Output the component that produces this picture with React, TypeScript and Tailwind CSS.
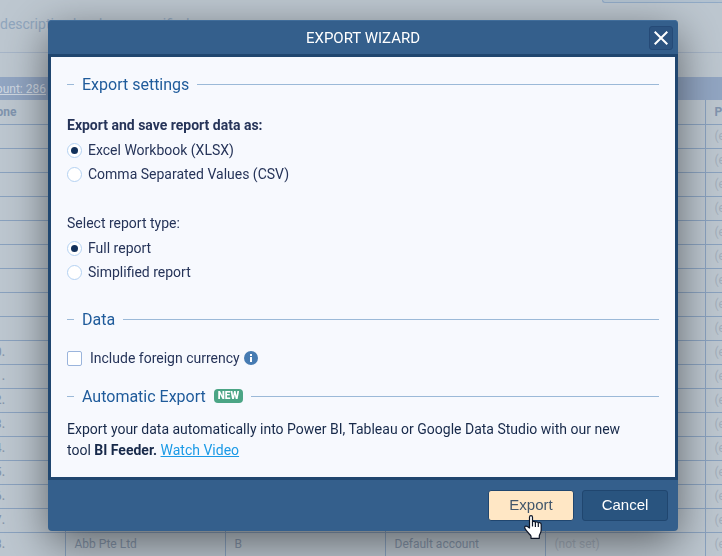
import { useState, type ReactNode } from "react";

const rows = Array.from({ length: 18 }, (_, i) => i + 1);

function Section({ title, badge }: { title: string; badge?: string }) {
  return (
    <h2 className="flex h-6 items-center text-base leading-[22px] text-[#1f5b9b]">
      <span className="mr-2 h-px w-[7px] bg-[#9bb9d8]" />
      <span className="pt-0.5">{title}</span>
      {badge && (
        <span className="ml-2 h-[14px] rounded bg-[#4ba585] px-1 text-[10px] leading-[14px] font-black text-white">
          {badge}
        </span>
      )}
      <span className="ml-2 h-px flex-1 bg-[#9bb9d8]" />
    </h2>
  );
}

function Radio(props: { name: string; checked: boolean; onChange: () => void; children: ReactNode }) {
  return (
    <label className="flex h-6 items-center gap-[6px]">
      <input
        type="radio"
        name={props.name}
        checked={props.checked}
        onChange={props.onChange}
        className="grid size-[15px] appearance-none place-items-center rounded-full border border-[#b4d2f2] bg-white before:size-[7px] before:rounded-full checked:before:bg-[#12305a]"
      />
      {props.children}
    </label>
  );
}

function ReportPage() {
  return (
    <div className="w-full overflow-hidden text-[12px]" inert>
      <div className="flex h-[53px] flex-col border-b border-[#a6b5c8]">
        <div className="h-[3px] w-[120px] self-end rounded-bl border-b border-l border-[#91aac6] bg-[#b3c2d0]" />
        <p className="pt-[9px] text-sm leading-6 whitespace-nowrap text-[#90a6be]">description has been specified</p>
      </div>
      <div className="mt-6 flex h-[23px] items-center bg-[#92a6c3]">
        <a href="#count" className="-ml-3 whitespace-nowrap text-[#d0d8e2] underline">
          Count: 286
        </a>
      </div>
      <table className="w-[865px] table-fixed border-collapse text-left leading-[23px] text-[#8595aa]">
        <colgroup>
          <col className="w-[65px]" />
          <col className="w-[160px]" />
          <col className="w-[160px]" />
          <col className="w-[160px]" />
          <col className="w-[160px]" />
          <col className="w-[160px]" />
        </colgroup>
        <thead>
          <tr className="h-6 border-b border-[#8aa2bf] leading-[21px] text-[#8094ae]">
            <th className="border-r border-[#8aa2bf] p-0 pt-0.5"><div className="-ml-3">None</div></th>
            <th className="border-r border-[#8aa2bf] p-0 pt-0.5 pl-[9px]">Name</th>
            <th className="border-r border-[#8aa2bf] p-0 pt-0.5 pl-[9px]">Type</th>
            <th className="border-r border-[#8aa2bf] p-0 pt-0.5 pl-[9px]">Account</th>
            <th className="border-r border-[#8aa2bf] p-0 pt-0.5 pl-[9px]">Group</th>
            <th className="p-0 pt-0.5 pl-[9px]">Phone</th>
          </tr>
        </thead>
        <tbody>
          {rows.map((n) => (
            <tr key={n} className="h-6 border-b border-[#8aa2bf]">
              <td className="border-r border-[#8aa2bf] p-0"><div className="-ml-3 font-medium">{n}.</div></td>
              <td className="border-r border-[#8aa2bf] p-0 pl-[9px]">Abb Pte Ltd</td>
              <td className="border-r border-[#8aa2bf] p-0 pl-[9px]">B</td>
              <td className="border-r border-[#8aa2bf] p-0 pl-[9px]">Default account</td>
              <td className="border-r border-[#8aa2bf] p-0 pl-[9px] text-[#a3aebb]">(not set)</td>
              <td className="p-0 pl-[9px] text-[#a3aebb]">(empty)</td>
            </tr>
          ))}
        </tbody>
      </table>
    </div>
  );
}

export default function App() {
  const [format, setFormat] = useState("xlsx");
  const [kind, setKind] = useState("full");
  const [currency, setCurrency] = useState(false);

  return (
    <div className="h-screen overflow-hidden bg-[#bdc7d0] font-['Roboto',sans-serif]">
      <ReportPage />
      <div className="fixed inset-0 overflow-hidden pt-5 pr-11 pl-12">
        <section
          role="dialog"
          aria-labelledby="wizard-title"
          className="mx-auto max-w-[630px] rounded bg-[#345f8c] text-sm text-[#263459] shadow-[0_12px_44px_rgba(0,0,0,0.5)]"
        >
          <header className="flex h-[34px] items-center rounded-t border-t border-[#416d9a] pr-[5px]">
            <h1 id="wizard-title" className="flex-1 pl-[29px] text-center text-[15px] leading-6 text-white">
              EXPORT WIZARD
            </h1>
            <button
              type="button"
              aria-label="Close"
              className="grid size-6 place-items-center rounded-[3px] border border-[#254a77] bg-[#2c5380]"
            >
              <svg viewBox="0 0 14 14" className="size-[14px]" fill="none" stroke="#fff" strokeWidth="2">
                <path d="M.7.7l12.6 12.6M13.3.7L.7 13.3" />
              </svg>
            </button>
          </header>

          <div className="border-3 border-[#20466f] bg-[#f7f9fe] px-4 pt-[15px] pb-4">
            <Section title="Export settings" />
            <fieldset className="mt-[17px]">
              <legend className="h-[25px] leading-6 font-bold">Export and save report data as:</legend>
              <Radio name="format" checked={format === "xlsx"} onChange={() => setFormat("xlsx")}>
                Excel Workbook (XLSX)
              </Radio>
              <Radio name="format" checked={format === "csv"} onChange={() => setFormat("csv")}>
                Comma Separated Values (CSV)
              </Radio>
            </fieldset>
            <fieldset className="mt-[25px]">
              <legend className="h-[25px] leading-6">Select report type:</legend>
              <Radio name="kind" checked={kind === "full"} onChange={() => setKind("full")}>
                Full report
              </Radio>
              <Radio name="kind" checked={kind === "simple"} onChange={() => setKind("simple")}>
                Simplified report
              </Radio>
            </fieldset>

            <div className="mt-[23px]">
              <Section title="Data" />
            </div>
            <div className="mt-[15px] flex h-6 items-center gap-1">
              <label className="flex items-center gap-2">
                <input
                  type="checkbox"
                  checked={currency}
                  onChange={() => setCurrency(!currency)}
                  className="size-[15px] appearance-none rounded-[2px] border border-[#9ab4dc] bg-white checked:bg-[#12305a]"
                />
                Include foreign currency
              </label>
              <svg viewBox="0 0 14 14" className="size-[14px]">
                <circle cx="7" cy="7" r="7" fill="#467bb2" />
                <path d="M6 3h2v2H6zM6 6h2v5H6z" fill="#fff" />
              </svg>
            </div>

            <div className="mt-[14px]">
              <Section title="Automatic Export" badge="NEW" />
            </div>
            <p className="mt-[11px] max-w-[570px] leading-[21px] text-[#17294a]">
              Export your data automatically into Power BI, Tableau or Google Data Studio with our new tool{" "}
              <b>BI Feeder.</b>{" "}
              <a href="#video" className="text-[#1b9ae6] underline">
                Watch Video
              </a>
            </p>
          </div>

          <footer className="flex h-[51px] items-center justify-end gap-2 pr-[10px] font-['Liberation_Sans',Arial,sans-serif] text-[15px]">
            <button
              type="button"
              className="relative h-[31px] w-[86px] rounded-[3px] border border-[#20466f] bg-[#ffe7c5] pb-0.5 text-[#42566b]"
            >
              Export
              <svg
                viewBox="0 0 18 25"
                className="absolute top-[24px] left-[35px] h-[25px] w-[18px]"
                fill="#fff"
                stroke="#0d1526"
                strokeWidth="1.2"
                strokeLinejoin="round"
              >
                <path d="M5.500 13V2.200C5.500.2 8.500.2 8.500 2.200V7.500c0-1.600 2.900-1.600 2.900.4 0-1.600 2.900-1.400 2.900.6 0-1.400 2.900-1.200 2.900.9V15c0 3-1.900 4.500-1.900 6v2.300H7V21C5.500 19 2.500 16.500 1 13.500c-1-2 1-3.200 2.400-1.900z" />
                <path d="M8.500 7.500v4M11.400 8v4M14.300 9v3" fill="none" />
              </svg>
            </button>
            <button
              type="button"
              className="h-[31px] w-[86px] rounded-[3px] border border-[#20466f] bg-[#29547f] pb-0.5 text-white"
            >
              Cancel
            </button>
          </footer>
        </section>
      </div>
    </div>
  );
}
